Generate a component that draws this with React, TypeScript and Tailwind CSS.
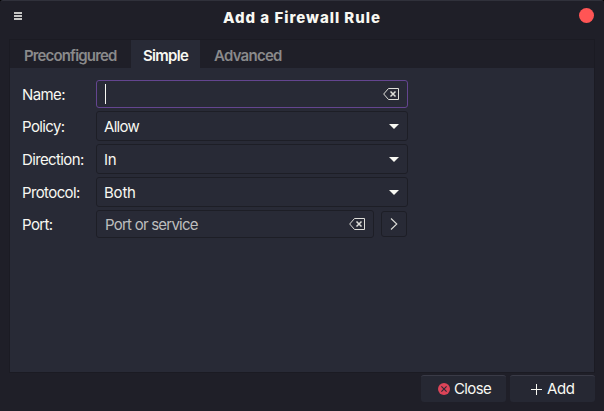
import React from "react";

function ClearIcon() {
  return (
    <svg width="16" height="12" viewBox="0 0 16 12" fill="none" stroke="#deded9" className="shrink-0">
      <path d="M5.5 .5h10v11h-10L.7 6z" />
      <path d="M7.5 3.5l5 5M12.5 3.5l-5 5" strokeWidth="1.5" />
    </svg>
  );
}

function Label({ children }: { children: string }) {
  return <span className="w-[74px] shrink-0 pt-0.5 tracking-[-0.62px]">{children}</span>;
}

function SelectRow({ label, value, tracking }: { label: string; value: string; tracking: string }) {
  return (
    <div className="flex h-[30px] items-center">
      <Label>{label}</Label>
      <button className="flex h-[30px] w-[312px] items-center justify-between rounded-[3px] border border-[#1d1e26] pl-[7px] pr-2">
        <span className={`pt-0.5 ${tracking}`}>{value}</span>
        <svg width="10" height="5" viewBox="0 0 10 5" fill="#f8f8f2">
          <path d="M0 0h10L5 5z" />
        </svg>
      </button>
    </div>
  );
}

export default function App() {
  return (
    <div className="h-[411px] w-[604px] bg-black">
      <div className="flex h-full flex-col rounded-t-[3px] border-t border-[#30313b] bg-[#1f1f28] font-['Inter',sans-serif] text-[15px] leading-[18px] text-[#f8f8f2]">
        <header className="flex h-[38px] shrink-0 items-start justify-between pl-[14px] pr-[10px]">
          <svg width="8" height="8" viewBox="0 0 8 8" fill="#c6c6c5" className="mt-[11px]">
            <path d="M0 0h8v2H0zM0 3h8v2H0zM0 6h8v2H0z" />
          </svg>
          <h1 className="ml-[3px] mt-[8px] text-[15px] font-extrabold leading-[18px] tracking-[0.97px]">Add a Firewall Rule</h1>
          <span className="mt-[7px] size-[15px] rounded-full bg-[#ff5555]" />
        </header>
        <main className="mx-[9px] flex h-[334px] shrink-0 flex-col border border-[#1b1b23] bg-[#282a36]">
          <nav className="flex h-7 shrink-0 items-stretch bg-[#1f1f28] font-semibold text-[#8a8a8b]">
            <span className="w-[121px] pl-[14px] pt-[7px] tracking-[-0.85px]">Preconfigured</span>
            <span className="w-[69px] bg-[#282a36] pl-3 pt-[7px] tracking-[-0.7px] text-[#f8f8f2]">Simple</span>
            <span className="pl-[14px] pt-[7px] tracking-[-0.75px]">Advanced</span>
          </nav>
          <form className="flex flex-col gap-[3px] pl-3 pt-3">
            <div className="flex h-7 items-center">
              <Label>Name:</Label>
              <div className="flex h-7 w-[312px] items-center justify-between rounded-[3px] border border-[#644590] pl-2 pr-2">
                <span className="h-5 w-px bg-[#f8f8f2]" />
                <ClearIcon />
              </div>
            </div>
            <SelectRow label="Policy:" value="Allow" tracking="tracking-[-0.7px]" />
            <SelectRow label="Direction:" value="In" tracking="tracking-[-0.2px]" />
            <SelectRow label="Protocol:" value="Both" tracking="tracking-[-0.2px]" />
            <div className="flex h-7 items-center">
              <Label>Port:</Label>
              <div className="flex h-7 w-[278px] items-center justify-between rounded-[3px] border border-[#1d1e26] pl-2 pr-2">
                <span className="pt-0.5 tracking-[-0.77px] text-[#bdbebe]">Port or service</span>
                <ClearIcon />
              </div>
              <button className="ml-[7px] flex h-[26px] w-[26px] items-center justify-center rounded-[3px] border border-[#1d1e26]">
                <svg width="8" height="12" viewBox="0 0 8 12" fill="none" stroke="#deded9" strokeWidth="1.1">
                  <path d="M1 .5L6.8 6 1 11.5" />
                </svg>
              </button>
            </div>
          </form>
        </main>
        <footer className="flex justify-end gap-1 pr-[9px] pt-[2px]">
          <button className="flex h-[27px] w-[85px] items-center rounded-[3px] border-t border-[#3a3b47] bg-[#262833] pl-[17px]">
            <svg width="12" height="12" viewBox="0 0 12 12" fill="none">
              <circle cx="6" cy="6" r="6" fill="#dc4458" />
              <path d="M3.4 3.4l5.2 5.2M8.6 3.4L3.4 8.6" stroke="#282a36" strokeWidth="1.1" />
            </svg>
            <span className="ml-1 tracking-[-0.65px]">Close</span>
          </button>
          <button className="flex h-[27px] w-[85px] items-center rounded-[3px] border-t border-[#3a3b47] bg-[#262833] pl-[21px]">
            <svg width="11" height="11" viewBox="0 0 11 11" fill="none" stroke="#f8f8f2">
              <path d="M5.5 0v11M0 5.5h11" />
            </svg>
            <span className="ml-[5px] tracking-[-0.4px]">Add</span>
          </button>
        </footer>
      </div>
    </div>
  );
}
